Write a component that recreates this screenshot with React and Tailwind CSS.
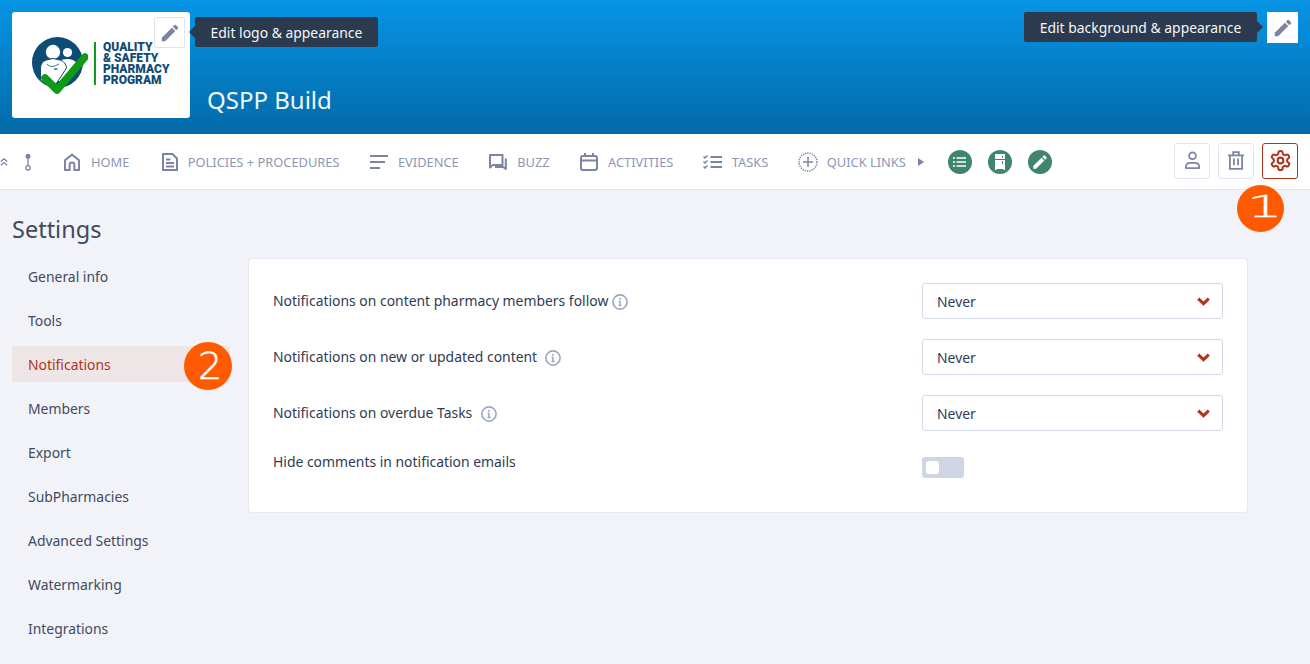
import React from "react";

const Pencil = ({ className }) => (
  <svg viewBox="0 0 24 24" className={className} fill="currentColor">
    <path d="M3 17.25V21h3.75L17.81 9.94l-3.75-3.75L3 17.25zM20.71 7.04a1 1 0 0 0 0-1.41l-2.34-2.34a1 1 0 0 0-1.41 0l-1.83 1.83 3.75 3.75 1.83-1.83z" />
  </svg>
);

const S = { fill: "none", stroke: "currentColor", strokeWidth: 2 };

const Home = () => (
  <svg viewBox="0 0 18 18" className="w-[18px] h-[18px]" {...S}>
    <path d="M2 17V7.2L9 1.6l7 5.6V17h-4.6v-5.2a2.4 2.4 0 0 0-4.8 0V17z" strokeLinejoin="round" />
  </svg>
);
const Doc = () => (
  <svg viewBox="0 0 16 18" className="w-[16px] h-[18px] ml-[2px]" {...S}>
    <path d="M1 1h9.5L15 5.5V17H1z M4 6.5h4.5 M4 10h8 M4 13.5h8" />
  </svg>
);
const Lines = () => (
  <svg viewBox="0 0 18 14" className="w-[18px] h-[14px]" {...S}>
    <path d="M0 1h18 M0 7h15 M0 13h10" />
  </svg>
);
const Buzz = () => (
  <svg viewBox="0 0 18 16" className="w-[18px] h-[16px]" {...S}>
    <path d="M1 1h12.5v10H4l-3 2.5z M16.8 4.5V15l-2.6-2H6" strokeLinejoin="round" />
  </svg>
);
const Calendar = () => (
  <svg viewBox="0 0 18 18" className="w-[18px] h-[18px]" {...S}>
    <rect x="1" y="3" width="16" height="14" rx="2" />
    <path d="M1 7.5h16 M5 0v4 M13 0v4" />
  </svg>
);
const Tasks = () => (
  <svg viewBox="0 0 19 14" className="w-[19px] h-[14px] shrink-0" {...S}>
    <path d="M7.5 2H19 M7.5 7H19 M7.5 12H19" />
    <path d="M.5 1.5l1.5 1.5L4.5.5 M.5 6.5L2 8l2.5-2.5 M.5 11.5L2 13l2.5-2.5" strokeWidth="1.5" />
  </svg>
);
const Plus = () => (
  <svg viewBox="0 0 20 20" className="w-[20px] h-[20px] shrink-0 ml-[1px]" fill="none" stroke="currentColor">
    <circle cx="10" cy="10" r="9" strokeDasharray="1.3 1" strokeWidth="1.5" />
    <path d="M10 5v10 M5 10h10" strokeWidth="1.5" />
  </svg>
);
const Info = () => (
  <svg viewBox="0 0 16 16" className="w-4 h-4 text-[#9ba6c4]" fill="none" stroke="currentColor">
    <circle cx="8" cy="8" r="7.1" strokeWidth="1.6" />
    <path d="M8 7.2v4.2 M6.6 11.4h2.8 M6.7 7.2H8" strokeWidth="1.5" />
    <circle cx="8" cy="4.7" r="1" fill="currentColor" stroke="none" />
  </svg>
);
const Chevron = () => (
  <svg viewBox="0 0 13 9" className="w-[13px] h-[9px] text-[#b0341a]" fill="none" stroke="currentColor" strokeWidth="3">
    <path d="M1.2 1.6L6.5 6.6l5.3-5" />
  </svg>
);
const Gear = () => (
  <svg viewBox="0 0 24 24" className="w-[23px] h-[23px]" fill="none" stroke="currentColor" strokeWidth="2.1" strokeLinecap="round" strokeLinejoin="round">
    <path d="M12.22 2h-.44a2 2 0 0 0-2 2v.18a2 2 0 0 1-1 1.73l-.43.25a2 2 0 0 1-2 0l-.15-.08a2 2 0 0 0-2.73.73l-.22.38a2 2 0 0 0 .73 2.73l.15.1a2 2 0 0 1 1 1.72v.51a2 2 0 0 1-1 1.74l-.15.09a2 2 0 0 0-.73 2.73l.22.38a2 2 0 0 0 2.73.73l.15-.08a2 2 0 0 1 2 0l.43.25a2 2 0 0 1 1 1.73V20a2 2 0 0 0 2 2h.44a2 2 0 0 0 2-2v-.18a2 2 0 0 1 1-1.73l.43-.25a2 2 0 0 1 2 0l.15.08a2 2 0 0 0 2.73-.73l.22-.39a2 2 0 0 0-.73-2.73l-.15-.08a2 2 0 0 1-1-1.74v-.5a2 2 0 0 1 1-1.74l.15-.09a2 2 0 0 0 .73-2.73l-.22-.38a2 2 0 0 0-2.73-.73l-.15.08a2 2 0 0 1-2 0l-.43-.25a2 2 0 0 1-1-1.73V4a2 2 0 0 0-2-2z" />
    <circle cx="12" cy="12" r="3" />
  </svg>
);

const LogoMark = () => (
  <svg viewBox="0 0 56 58" className="w-[56px] h-[58px] shrink-0">
    <circle cx="25.5" cy="25.5" r="25.5" fill="#0f4c75" />
    <circle cx="35.5" cy="15.5" r="4.6" fill="#fff" />
    <path d="M27 24q3-2 8.5-2 6 0 9 4L30 44H20z" fill="#fff" />
    <circle cx="21" cy="15" r="7.2" fill="#fff" />
    <path d="M8.5 43V31q0-6 6-8l6.5-1.5 7 1.5q6 2 6.500 8L24 47H14z" fill="#fff" stroke="#0f4c75" strokeWidth="1" />
    <path d="M15 27q4 5 12 0" fill="none" stroke="#0f4c75" strokeWidth="0.8" />
    <path d="M22 32h3.500" stroke="#0f4c75" strokeWidth="1.2" />
    <path d="M13 41l12 12 28-33" stroke="#0f9b16" strokeWidth="7.500" strokeLinecap="round" strokeLinejoin="round" fill="none" />
  </svg>
);

const nav = [
  ["HOME", <Home />],
  ["POLICIES + PROCEDURES", <Doc />],
  ["EVIDENCE", <Lines />],
  ["BUZZ", <Buzz />],
  ["ACTIVITIES", <Calendar />],
  ["TASKS", <Tasks />],
];

const side = ["General info", "Tools", "Notifications", "Members", "Export", "SubPharmacies", "Advanced Settings", "Watermarking", "Integrations"];

const rows = [
  ["Notifications on content pharmacy members follow", "gap-1"],
  ["Notifications on new or updated content", "gap-2"],
  ["Notifications on overdue Tasks", "gap-[9px]"],
];

const Tip = ({ children, className }) => (
  <div className={`h-[30px] flex items-center justify-center pt-[2px] rounded-[2px] bg-[#2b3a4f] text-[#f4f6f8] text-[13.92px] whitespace-nowrap ${className}`}>{children}</div>
);

export default function App() {
  return (
    <div className="relative w-full h-[664px] overflow-hidden bg-[#f2f3f8] font-['Noto_Sans',sans-serif] text-[13.92px]">
      <header className="h-[134px] flex justify-between bg-gradient-to-b from-[#0795e5] to-[#036aa8] px-3 pt-3">
        <div className="flex">
          <div className="relative w-[178px] h-[106px] bg-white rounded-[3px] flex items-start pl-5 pt-[25px] gap-[6px]">
            <LogoMark />
            <div className="mt-[5px] border-l-2 border-[#0f9b16] pl-[7px] h-[43px] flex flex-col justify-center font-['Roboto',sans-serif] font-black text-[#0f4c75] text-[12px] leading-[11px]">
              <span>QUALITY</span>
              <span>&amp; SAFETY</span>
              <span>PHARMACY</span>
              <span>PROGRAM</span>
            </div>
            <button className="absolute left-[142px] top-[5px] w-[31px] h-[31px] bg-white border border-[#e2e5ef] rounded-[2px] flex items-center justify-center text-[#7b84a3]">
              <Pencil className="w-[22px] h-[22px]" />
            </button>
          </div>
          <div className="pl-[17px] self-end pb-[18px] text-[24px] leading-[32px] text-[#f2f8fc]">QSPP Build</div>
        </div>
        <div className="flex items-start">
          <div className="relative w-[233px] mr-[10px]">
            <Tip className="w-[233px]">Edit background &amp; appearance</Tip>
            <span className="absolute right-[-6px] top-[9px] border-y-[6px] border-y-transparent border-l-[6px] border-l-[#2b3a4f]" />
          </div>
          <button className="w-[31px] h-[31px] bg-white flex items-center justify-center text-[#7b84a3]">
            <Pencil className="w-[22px] h-[22px]" />
          </button>
        </div>
      </header>

      <div className="absolute left-[195px] top-[17px]">
        <span className="absolute left-[-6px] top-[9px] border-y-[6px] border-y-transparent border-r-[6px] border-r-[#2b3a4f]" />
        <Tip className="w-[183px]">Edit logo &amp; appearance</Tip>
      </div>

      <nav className="h-[56px] bg-white border-b border-[#e3e6ec] flex items-center pr-3 text-[#8d97b4] text-[12.87px]">
        <svg viewBox="0 0 8 8" className="w-2 h-2 text-[#7b84a3]" fill="none" stroke="currentColor" strokeWidth="1.3">
          <path d="M.8 3.4L4 .8l3.2 2.6 M.8 7.2L4 4.6l3.2 2.6" />
        </svg>
        <svg viewBox="0 0 8 18" className="w-2 h-[18px] ml-[16px] text-[#7b84a3]" fill="none" stroke="currentColor" strokeWidth="1.3">
          <circle cx="4" cy="3.2" r="2.5" fill="currentColor" stroke="none" />
          <path d="M4 5v8" />
          <circle cx="4" cy="14.8" r="2.2" />
        </svg>
        <div className="flex items-center ml-[31px] gap-[30.4px]">
          {nav.map(([label, icon]) => (
            <div key={label} className="flex items-center h-5">
              <span className="text-[#7b84a3] flex items-center justify-center w-[18px]">{icon}</span>
              <span className="ml-[10px] pt-[2px]">{label}</span>
            </div>
          ))}
          <div className="flex items-center h-5">
            <span className="text-[#7b84a3] flex items-center justify-center w-[18px]"><Plus /></span>
            <span className="ml-[10px] pt-[2px]">QUICK LINKS</span>
            <span className="ml-[12px] border-y-[4.5px] border-y-transparent border-l-[6px] border-l-[#7b84a3]" />
          </div>
        </div>
        <div className="flex items-center gap-[16px] ml-[24px]">
          <span className="w-6 h-6 rounded-full bg-[#3f8570] flex items-center justify-center">
            <svg viewBox="0 0 13 10" className="w-[13px] h-[10px]" fill="none" stroke="#fff" strokeWidth="1.5">
              <path d="M3.5 1H13 M3.5 5H13 M3.5 9H13 M0 1h2 M0 5h2 M0 9h2" />
            </svg>
          </span>
          <span className="w-6 h-6 rounded-full bg-[#3f8570] flex items-center justify-center">
            <svg viewBox="0 0 12 16" className="w-[12px] h-[16px]">
              <path d="M1 0h10v16H9.500v-1h-7v1H1z" fill="#fff" />
              <path d="M1 5.500h10" stroke="#3f8570" strokeWidth="1" />
              <path d="M8.500 2v2 M8.500 7v3" stroke="#3f8570" strokeWidth="1" />
            </svg>
          </span>
          <span className="w-6 h-6 rounded-full bg-[#3f8570] flex items-center justify-center text-white">
            <Pencil className="w-[18px] h-[18px]" />
          </span>
        </div>
        <div className="ml-auto mb-[2px] flex items-center gap-2">
          <button className="w-9 h-9 rounded-[3px] border border-[#e2e5ef] bg-white flex items-center justify-center text-[#7b84a3]">
            <svg viewBox="0 0 18 20" className="w-[17px] h-[19px]" fill="none" stroke="currentColor" strokeWidth="1.9">
              <circle cx="9" cy="5" r="3.6" />
              <path d="M2 18v-1.500C2 14 4 12.500 6.500 12.500h5c2.500 0 4.500 1.500 4.500 4V18z" strokeLinejoin="round" />
            </svg>
          </button>
          <button className="w-9 h-9 rounded-[3px] border border-[#e2e5ef] bg-white flex items-center justify-center text-[#7b84a3]">
            <svg viewBox="0 0 17 20" className="w-[16px] h-[19px]" fill="none" stroke="currentColor" strokeWidth="1.9">
              <path d="M0 4.500h17 M5.500 4.500V1.200h6v3.300 M2 4.500V19h13V4.500 M6.300 8v7 M10.700 8v7" />
            </svg>
          </button>
          <button className="w-9 h-9 rounded-[3px] border border-[#b0341a] bg-white flex items-center justify-center text-[#b0341a]">
            <Gear />
          </button>
        </div>
      </nav>

      <main className="flex pl-3 pt-[22px]">
        <aside className="w-[218px] shrink-0">
          <h1 className="pt-[1px] text-[23.5px] leading-[33px] text-[#3f4a5e] mb-[12px]">Settings</h1>
          <ul className="flex flex-col gap-2">
            {side.map((s) => (
              <li
                key={s}
                className={`h-9 flex items-center pl-4 pt-[2px] rounded-[2px] ${
                  s === "Notifications" ? "bg-[#eee5e7] text-[#b0341a]" : "text-[#3f4a5e]"
                }`}
              >
                {s}
              </li>
            ))}
          </ul>
        </aside>
        <section className="ml-[18px] mt-[46px] w-[1000px] h-[255px] bg-white border border-[#e6e8f1] rounded-[4px] px-6 pt-6 self-start">
          <div className="flex flex-col gap-5">
            {rows.map(([label, gap]) => (
              <div key={label} className="flex items-center justify-between h-9">
                <div className={`flex items-center ${gap} text-[#2f3b52] pt-[1px]`}>
                  <span>{label}</span>
                  <Info />
                </div>
                <div className="w-[301px] h-9 bg-white border border-[#d3d8e8] rounded-[3px] flex items-center justify-between pl-[14px] pr-[12px] text-[#2f3b52]">
                  <span className="pt-[2px]">Never</span>
                  <Chevron />
                </div>
              </div>
            ))}
            <div className="flex justify-between mt-[1px]">
              <span className="text-[#2f3b52] leading-5">Hide comments in notification emails</span>
              <div className="w-[301px]">
                <div className="w-[42px] h-[21px] mt-[5px] rounded-[3px] bg-[#d0d5e5] flex items-center pl-1">
                  <span className="w-[13px] h-[13px] rounded-[3px] bg-white" />
                </div>
              </div>
            </div>
          </div>
        </section>
      </main>

      <div className="absolute left-[1237px] top-[185px] w-[47px] h-[47px] pl-[9px] pb-[3px] rounded-full bg-[#ff5a00] text-white flex items-center justify-center text-[30px] leading-none font-['DejaVu_Sans',sans-serif] font-extralight [-webkit-text-stroke:0.3px_white]"><span className="scale-x-[1.9]">1</span></div>
      <div className="absolute left-[184px] top-[342px] w-[48px] h-[48px] pl-1 rounded-full bg-[#ff5a00] text-white flex items-center justify-center text-[38px] leading-none font-['DejaVu_Sans',sans-serif] font-extralight [-webkit-text-stroke:0.6px_white]">2</div>
    </div>
  );
}
